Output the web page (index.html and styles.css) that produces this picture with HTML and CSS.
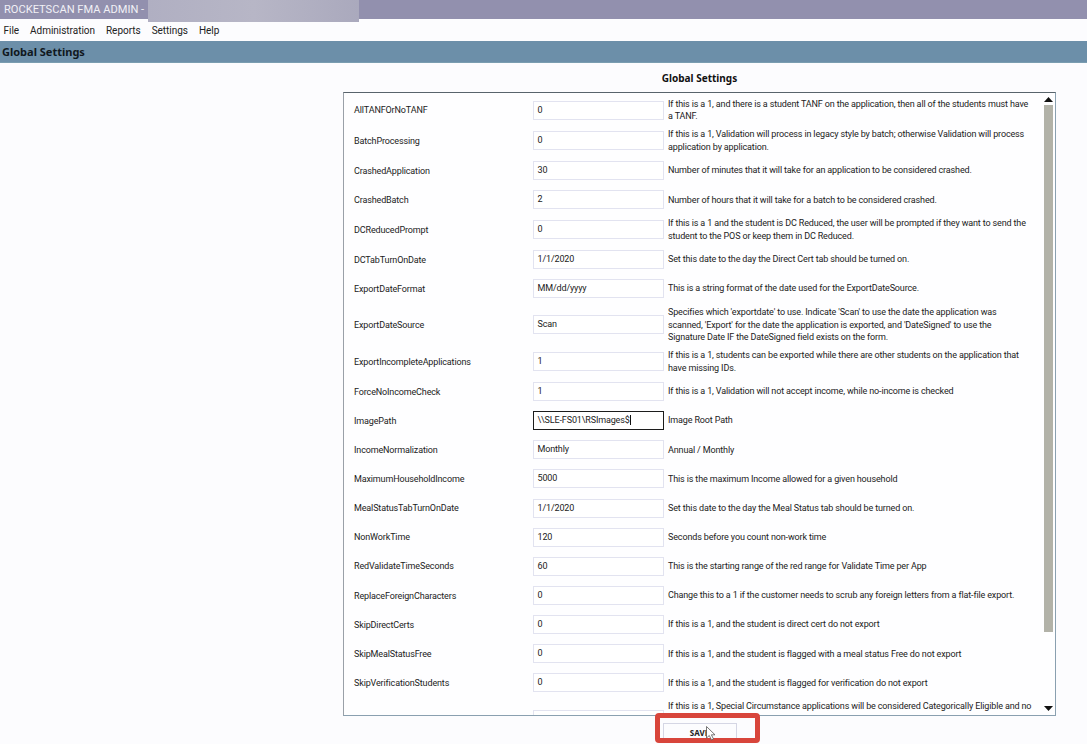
FILE: index.html
```html
<!DOCTYPE html>
<html lang="en">
<head>
<meta charset="utf-8">
<title>RocketScan FMA Admin</title>
<link rel="stylesheet" href="styles.css">
</head>
<body>
<header class="titlebar"><span class="title">ROCKETSCAN FMA ADMIN -</span><span class="blur"></span></header>
<nav class="menu"><span>File</span><span>Administration</span><span>Reports</span><span>Settings</span><span>Help</span></nav>
<div class="pagebar">Global Settings</div>
<main class="content">
  <h1 class="heading">Global Settings</h1>
  <section class="panel">
    <div class="rows">
      <div class="row"><label>AllTANFOrNoTANF</label><div class="field">0</div><p>If this is a 1, and there is a student TANF on the application, then all of the students must have a TANF.</p></div>
      <div class="row"><label>BatchProcessing</label><div class="field">0</div><p>If this is a 1, Validation will process in legacy style by batch; otherwise Validation will process application by application.</p></div>
      <div class="row"><label>CrashedApplication</label><div class="field">30</div><p>Number of minutes that it will take for an application to be considered crashed.</p></div>
      <div class="row"><label>CrashedBatch</label><div class="field">2</div><p>Number of hours that it will take for a batch to be considered crashed.</p></div>
      <div class="row"><label>DCReducedPrompt</label><div class="field">0</div><p>If this is a 1 and the student is DC Reduced, the user will be prompted if they want to send the student to the POS or keep them in DC Reduced.</p></div>
      <div class="row"><label>DCTabTurnOnDate</label><div class="field">1/1/2020</div><p>Set this date to the day the Direct Cert tab should be turned on.</p></div>
      <div class="row"><label>ExportDateFormat</label><div class="field">MM/dd/yyyy</div><p>This is a string format of the date used for the ExportDateSource.</p></div>
      <div class="row"><label>ExportDateSource</label><div class="field">Scan</div><p>Specifies which 'exportdate' to use. Indicate 'Scan' to use the date the application was scanned, 'Export' for the date the application is exported, and 'DateSigned' to use the<br>Signature Date IF the DateSigned field exists on the form.</p></div>
      <div class="row"><label>ExportIncompleteApplications</label><div class="field">1</div><p>If this is a 1, students can be exported while there are other students on the application that have missing IDs.</p></div>
      <div class="row"><label>ForceNoIncomeCheck</label><div class="field">1</div><p>If this is a 1, Validation will not accept income, while no-income is checked</p></div>
      <div class="row"><label>ImagePath</label><div class="field focused"><span class="caret">\\SLE-FS01\RSImages$</span></div><p>Image Root Path</p></div>
      <div class="row"><label>IncomeNormalization</label><div class="field">Monthly</div><p>Annual / Monthly</p></div>
      <div class="row"><label>MaximumHouseholdIncome</label><div class="field">5000</div><p>This is the maximum Income allowed for a given household</p></div>
      <div class="row"><label>MealStatusTabTurnOnDate</label><div class="field">1/1/2020</div><p>Set this date to the day the Meal Status tab should be turned on.</p></div>
      <div class="row"><label>NonWorkTime</label><div class="field">120</div><p>Seconds before you count non-work time</p></div>
      <div class="row"><label>RedValidateTimeSeconds</label><div class="field">60</div><p>This is the starting range of the red range for Validate Time per App</p></div>
      <div class="row"><label>ReplaceForeignCharacters</label><div class="field">0</div><p>Change this to a 1 if the customer needs to scrub any foreign letters from a flat-file export.</p></div>
      <div class="row"><label>SkipDirectCerts</label><div class="field">0</div><p>If this is a 1, and the student is direct cert do not export</p></div>
      <div class="row"><label>SkipMealStatusFree</label><div class="field">0</div><p>If this is a 1, and the student is flagged with a meal status Free do not export</p></div>
      <div class="row"><label>SkipVerificationStudents</label><div class="field">0</div><p>If this is a 1, and the student is flagged for verification do not export</p></div>
      <div class="row row-clipped"><label></label><div class="field">0</div><p>If this is a 1, Special Circumstance applications will be considered Categorically Eligible and no</p></div>
    </div>
    <div class="scrollbar">
      <svg class="arrow" viewBox="0 0 9 5" width="9" height="5"><path d="M0 5L4.5 0L9 5Z"/></svg>
      <div class="track"><div class="thumb"></div></div>
      <svg class="arrow" viewBox="0 0 9 5" width="9" height="5"><path d="M0 0L4.5 5L9 0Z"/></svg>
    </div>
  </section>
  <div class="savewrap">
    <button class="save">SAVE</button>
    <svg class="cursor" viewBox="0 0 10 15" width="10" height="15"><path d="M0.5 0.5V12L3.3 9.5L5.5 14L7.5 13L5.4 8.8H9Z"/></svg>
  </div>
</main>
</body>
</html>
```
FILE: styles.css
```css
* { box-sizing: border-box; }
html, body { height: 100%; }
body { margin: 0; height: 744px; overflow: hidden; background: #fcfcfe; color: #1a1a1a; font-family: Roboto, "Noto Sans", sans-serif; font-size: 9px; letter-spacing: -0.14px; }
.titlebar { height: 19px; background: #9290ae; display: flex; color: #f1f1f6; font-size: 11.1px; letter-spacing: 0; align-items: center; }
.title { padding-left: 4px; width: 148px; white-space: nowrap; }
.blur { width: 211px; height: 22px; align-self: flex-start; background: linear-gradient(90deg, #b0afc2, #b7b6c6 50%, #aaa9bd); }
.menu { height: 22px; display: flex; gap: 11px; padding-left: 3.5px; align-items: center; font-size: 10px; letter-spacing: -0.03px; color: #222; }
.pagebar { height: 22px; background: #6c8fa9; border-bottom: 1px solid #7a9db0; font-family: "Noto Sans", sans-serif; font-weight: 700; font-size: 11px; letter-spacing: 0; color: #10181e; padding-left: 2px; display: flex; align-items: center; }
.content { display: flex; flex-direction: column; align-items: center; padding-left: 312px; }
.heading { margin: 8px 0 0; height: 21px; font-family: "Noto Sans", sans-serif; font-size: 10px; font-weight: 700; letter-spacing: 0; color: #111; width: 713px; text-align: center; }
.panel { width: 713px; height: 624px; display: flex; border: 1px solid #8aa0b0; border-top-color: #59646c; border-left-color: #9aa0a8; overflow: hidden; background: #fefeff; }
.rows { flex: 1; padding: 2px 0 0 10px; overflow: hidden; }
.row { display: grid; grid-template-columns: 179px 131px 1fr; min-height: 29.15px; align-items: center; }
.row-clipped { min-height: 43px; }
.row-clipped p { align-self: start; padding-top: 3.5px; }
.row label { color: #222; }
.field { height: 19px; border: 1px solid #e2e3f0; background: #fff; padding-left: 3.5px; line-height: 16px; color: #222; }
.field.focused { border-color: #1c1c1c; }
.caret { border-right: 1px solid #111; }
.row p { margin: 0; padding: 2.7px 0 2.7px 4px; line-height: 12.6px; color: #222; width: 368px; }
.scrollbar { width: 11px; display: flex; flex-direction: column; align-items: center; padding-top: 4px; margin-right: 1px; }
.arrow { flex: none; fill: #111; margin: 0; }
.track { flex: 1; width: 100%; padding: 3px 1px 0; }
.thumb { height: 527px; background: #b2b2a8; width: 9px; }
.scrollbar .arrow:last-child { margin-bottom: 4px; }
.savewrap { position: relative; margin-top: 7px; width: 74px; height: 16px; }
.save { width: 74px; height: 17px; border: 1px solid #d5d6e4; border-bottom: 0; background: #fcfcfe; font: 700 8px "Noto Sans", sans-serif; letter-spacing: 0; color: #222; padding: 0; }
.cursor { position: absolute; left: 43px; top: 3px; fill: #fff; stroke: #555; stroke-width: .8; z-index: 3; }
.savewrap::before { content: ""; box-sizing: border-box; position: absolute; left: -8px; top: -10px; width: 105px; height: 30px; border: 5.5px solid #d8453b; border-radius: 4px; z-index: 2; }
```
